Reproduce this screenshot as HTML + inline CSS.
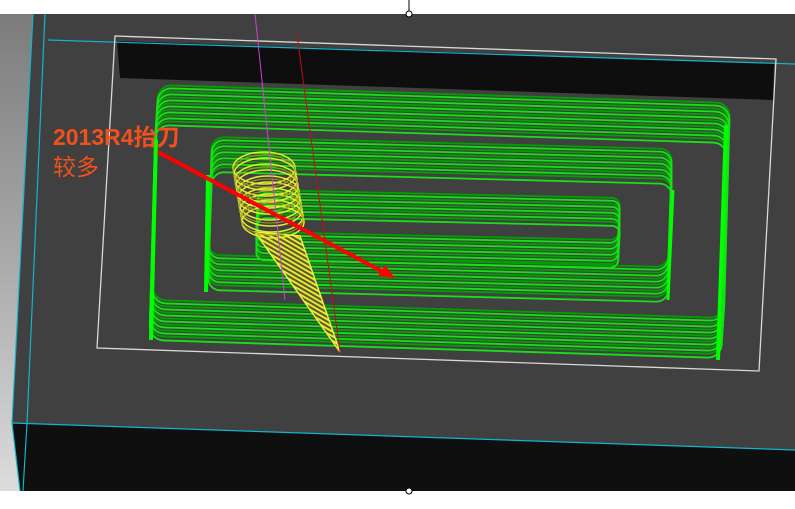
<!DOCTYPE html>
<html><head><meta charset="utf-8"><style>
html,body{margin:0;padding:0;background:#fff;}
body{width:795px;height:509px;overflow:hidden;position:relative;}
svg{position:absolute;left:0;top:0;}
.t{position:absolute;font-family:"Liberation Sans","Noto Sans CJK SC",sans-serif;color:#f2501c;font-size:23px;line-height:26px;}
</style></head><body>
<svg width="795" height="509" viewBox="0 0 795 509">
<defs>
<linearGradient id="lg" x1="0" y1="0" x2="0" y2="1">
<stop offset="0" stop-color="#7c7c7c"/><stop offset="0.5" stop-color="#a8a8a8"/><stop offset="1" stop-color="#dcdcdc"/>
</linearGradient>
<pattern id="ys" width="4" height="4" patternUnits="userSpaceOnUse" patternTransform="rotate(30)">
<rect width="4" height="4" fill="#5a5a30"/><rect width="4" height="2" fill="#e8e830"/>
</pattern>
<rect id="outer" x="0" y="0" width="572" height="215" rx="14" fill="none"/>
<rect id="mid" x="0" y="0" width="460" height="118" rx="12" fill="none"/>
<rect id="inn" x="0" y="0" width="362" height="42" rx="8" fill="none"/>
</defs>
<rect x="0" y="14" width="795" height="477" fill="#404040"/>
<polygon points="0,14 33,14 12,423 20,491 0,491" fill="url(#lg)"/>
<polygon points="12,423 795,450 795,491 20,491" fill="#0f0f0f"/>
<polyline points="33,14 12,423 20,491" fill="none" stroke="#13b4cc" stroke-width="1.2"/>
<polyline points="45,14 27,423 23,491" fill="none" stroke="#13b4cc" stroke-width="1.2"/>
<line x1="12" y1="423" x2="795" y2="450" stroke="#13b4cc" stroke-width="1.2"/>
<polygon points="117,41 774,63 773,100 120,78" fill="#0e0e0e"/>
<line x1="48" y1="40" x2="795" y2="64" stroke="#13b4cc" stroke-width="1.2"/>
<polygon points="115,36 776,59 759,371 97,348" fill="none" stroke="#d8d8d8" stroke-width="1.3"/>
<g stroke-width="1.8">
<g stroke="#00a000">
<use href="#outer" transform="matrix(1,0.0315,-0.028,1,158,85)"/>
<use href="#outer" transform="matrix(1,0.0315,-0.028,1,157.6,91)"/>
<use href="#outer" transform="matrix(1,0.0315,-0.028,1,157.2,97)"/>
<use href="#outer" transform="matrix(1,0.0315,-0.028,1,156.8,103)"/>
<use href="#outer" transform="matrix(1,0.0315,-0.028,1,156.4,109)"/>
<use href="#outer" transform="matrix(1,0.0315,-0.028,1,156,115)"/>
<use href="#outer" transform="matrix(1,0.0315,-0.028,1,155.6,121)"/>
</g>
<g stroke="#18e018">
<use href="#outer" transform="matrix(1,0.0315,-0.028,1,157.8,88)"/>
<use href="#outer" transform="matrix(1,0.0315,-0.028,1,157.4,94)"/>
<use href="#outer" transform="matrix(1,0.0315,-0.028,1,157,100)"/>
<use href="#outer" transform="matrix(1,0.0315,-0.028,1,156.6,106)"/>
<use href="#outer" transform="matrix(1,0.0315,-0.028,1,156.2,112)"/>
<use href="#outer" transform="matrix(1,0.0315,-0.028,1,155.8,118)"/>
<use href="#outer" transform="matrix(1,0.0315,-0.028,1,155.4,125)"/>
</g>
<g stroke="#00a000">
<use href="#mid" transform="matrix(1,0.026,-0.034,1,212,137)"/>
<use href="#mid" transform="matrix(1,0.026,-0.034,1,212,143)"/>
<use href="#mid" transform="matrix(1,0.026,-0.034,1,212,149)"/>
<use href="#mid" transform="matrix(1,0.026,-0.034,1,212,155)"/>
<use href="#mid" transform="matrix(1,0.026,-0.034,1,212,161)"/>
<use href="#mid" transform="matrix(1,0.026,-0.034,1,212,167)"/>
</g>
<g stroke="#18e018">
<use href="#mid" transform="matrix(1,0.026,-0.034,1,212,140)"/>
<use href="#mid" transform="matrix(1,0.026,-0.034,1,212,146)"/>
<use href="#mid" transform="matrix(1,0.026,-0.034,1,212,152)"/>
<use href="#mid" transform="matrix(1,0.026,-0.034,1,212,158)"/>
<use href="#mid" transform="matrix(1,0.026,-0.034,1,212,164)"/>
<use href="#mid" transform="matrix(1,0.026,-0.034,1,212,172)"/>
</g>
<g stroke="#00a000">
<use href="#inn" transform="matrix(1,0.022,-0.05,1,258,190)"/>
<use href="#inn" transform="matrix(1,0.022,-0.05,1,258,196)"/>
<use href="#inn" transform="matrix(1,0.022,-0.05,1,258,202)"/>
<use href="#inn" transform="matrix(1,0.022,-0.05,1,258,208)"/>
<use href="#inn" transform="matrix(1,0.022,-0.05,1,258,214)"/>
</g>
<g stroke="#18e018">
<use href="#inn" transform="matrix(1,0.022,-0.05,1,258,193)"/>
<use href="#inn" transform="matrix(1,0.022,-0.05,1,258,199)"/>
<use href="#inn" transform="matrix(1,0.022,-0.05,1,258,205)"/>
<use href="#inn" transform="matrix(1,0.022,-0.05,1,258,211)"/>
<use href="#inn" transform="matrix(1,0.022,-0.05,1,258,218)"/>
</g>
</g>
<line x1="156" y1="140" x2="151" y2="340" stroke="#00ff00" stroke-width="4"/>
<line x1="208" y1="175" x2="206" y2="292" stroke="#00ff00" stroke-width="4"/>
<line x1="726" y1="125" x2="718" y2="360" stroke="#00ff00" stroke-width="4"/>
<line x1="673" y1="190" x2="668" y2="300" stroke="#00ff00" stroke-width="3"/>
<polygon points="255,232 300,236 340,352" fill="url(#ys)" stroke="#f0f040" stroke-width="1.5"/>
<g fill="none" stroke="#e8e830" stroke-width="1.5">
<ellipse cx="264" cy="168" rx="31" ry="16"/>
<ellipse cx="265" cy="174" rx="31" ry="16"/>
<ellipse cx="266" cy="180" rx="31" ry="16"/>
<ellipse cx="267" cy="186" rx="31" ry="16"/>
<ellipse cx="268" cy="192" rx="31" ry="16"/>
<ellipse cx="269" cy="198" rx="31" ry="16"/>
<ellipse cx="270" cy="204" rx="31" ry="16"/>
<ellipse cx="271" cy="210" rx="31" ry="16"/>
<ellipse cx="272" cy="216" rx="31" ry="16"/>
<ellipse cx="273" cy="222" rx="31" ry="16"/>
</g>
<g fill="none" stroke="#a0a020" stroke-width="1">
<ellipse cx="264" cy="171" rx="31" ry="16"/>
<ellipse cx="266" cy="183" rx="31" ry="16"/>
<ellipse cx="268" cy="195" rx="31" ry="16"/>
<ellipse cx="270" cy="207" rx="31" ry="16"/>
<ellipse cx="272" cy="219" rx="31" ry="16"/>
</g>
<line x1="255" y1="14" x2="285" y2="300" stroke="#d040d0" stroke-width="1"/>
<line x1="297" y1="35" x2="340" y2="352" stroke="#c01010" stroke-width="1"/>
<line x1="158" y1="152" x2="385" y2="273" stroke="#ff0000" stroke-width="4"/>
<polygon points="395,278 378,276 385,265" fill="#ff0000"/>
<line x1="409" y1="0" x2="409" y2="12" stroke="#000" stroke-width="1"/>
<circle cx="409" cy="14" r="3" fill="#fff" stroke="#000" stroke-width="1"/>
<circle cx="409" cy="491" r="3" fill="#fff" stroke="#000" stroke-width="1"/>
</svg>
<div class="t" style="left:53px;top:124px;font-weight:bold;">2013R4抬刀</div>
<div class="t" style="left:53px;top:154px;">较多</div>
</body></html>
